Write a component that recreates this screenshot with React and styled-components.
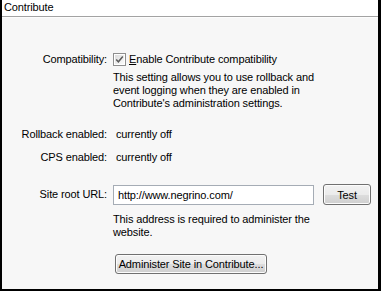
import React from "react";
import styled, { createGlobalStyle } from "styled-components";

const Global = createGlobalStyle`
  html, body { margin: 0; padding: 0; background: #fff; }
  body { font-family: "Liberation Sans", Arial, sans-serif; font-size: 11px; color: #000; letter-spacing: -0.12px; }
`;

const Frame = styled.div`
  box-sizing: border-box;
  width: 381px;
  height: 291px;
  border-left: 2px solid #000;
  border-right: 3px solid #000;
  border-bottom: 2px solid #000;
  background: #f7f7f7;
  display: flex;
  flex-direction: column;
`;

const Header = styled.div`
  background: #fff;
  height: 17px;
  padding: 1px 0 0 2px;
  box-sizing: border-box;
  line-height: 13px;
  font-size: 11px;
  border-bottom: 1px solid #a3a3a3;
  box-shadow: 0 1px 0 #fdfdfd;
`;

const Body = styled.div`
  display: flex;
  flex-direction: column;
`;

const Row = styled.div`
  display: grid;
  grid-template-columns: 105px auto 1fr;
  column-gap: 6px;
  align-items: center;
  margin-top: ${(p) => p.$mt}px;
  line-height: 13px;
`;

const Label = styled.div`
  text-align: right;
  white-space: nowrap;
`;

const Value = styled.div`
  grid-column: ${(p) => (p.$span ? "2 / span 2" : "auto")};
  white-space: nowrap;
`;

const Note = styled.div`
  grid-column: 2 / span 2;
  line-height: 13px;
`;

const CheckLabel = styled.label`
  grid-column: 2 / span 2;
  display: flex;
  align-items: center;
  gap: 3px;
`;

const Box = styled.span`
  width: 13px;
  height: 13px;
  display: inline-block;
`;

const U = styled.span`
  text-decoration: underline;
`;

const Input = styled.div`
  box-sizing: border-box;
  width: 201px;
  height: 20px;
  border: 1px solid #a5acb5;
  background: #fff;
  padding: 0 4px;
  line-height: 18px;
  font-size: 11px;
`;

const Button = styled.button`
  box-sizing: border-box;
  font-family: "Liberation Sans", Arial, sans-serif;
  font-size: 11px;
  letter-spacing: -0.12px;
  color: #000;
  height: ${(p) => p.$h}px;
  width: ${(p) => p.$w}px;
  padding: 0;
  border: 1px solid #707070;
  border-radius: 3px;
  background: linear-gradient(#f2f2f2 0%, #ebebeb 50%, #dddddd 51%, #cfcfcf 100%);
  box-shadow: inset 0 0 0 1px #fcfcfc;
  margin-left: ${(p) => p.$ml || 0}px;
  justify-self: start;
`;

const Checkbox = () => (
  <Box>
    <svg width="13" height="13" viewBox="0 0 13 13">
      <defs>
        <linearGradient id="cbg" x1="0" y1="0" x2="1" y2="1">
          <stop offset="0" stopColor="#dcdcdc" />
          <stop offset="1" stopColor="#fbfbfb" />
        </linearGradient>
      </defs>
      <rect x="0.5" y="0.5" width="12" height="12" fill="#fff" stroke="#8f8f8f" />
      <rect x="2" y="2" width="9" height="9" fill="url(#cbg)" />
      <path d="M3.2 6.4 L5.4 8.8 L9.8 3.6" fill="none" stroke="#5b5b5b" strokeWidth="1.5" />
    </svg>
  </Box>
);

export default function App() {
  return (
    <>
      <Global />
      <Frame>
        <Header>Contribute</Header>
        <Body>
          <Row $mt={36}>
            <Label>Compatibility:</Label>
            <CheckLabel>
              <Checkbox />
              <span>
                <U>E</U>nable Contribute compatibility
              </span>
            </CheckLabel>
          </Row>
          <Row $mt={5}>
            <span />
            <Note>
              This setting allows you to use rollback and
              <br />
              event logging when they are enabled in
              <br />
              Contribute's administration settings.
            </Note>
          </Row>
          <Row $mt={18}>
            <Label>Rollback enabled:</Label>
            <Value $span>&nbsp;currently off</Value>
          </Row>
          <Row $mt={10}>
            <Label>CPS enabled:</Label>
            <Value $span>&nbsp;currently off</Value>
          </Row>
          <Row $mt={20}>
            <Label>Site root URL:</Label>
            <Input>http://www.negrino.com/</Input>
            <Button $w={48} $h={21} $ml={3}>Test</Button>
          </Row>
          <Row $mt={8}>
            <span />
            <Note>
              This address is required to administer the
              <br />
              website.
            </Note>
          </Row>
          <Row $mt={15}>
            <span />
            <Value $span>
              <Button $w={152} $h={20} $ml={2}>Administer Site in Contribute...</Button>
            </Value>
          </Row>
        </Body>
      </Frame>
    </>
  );
}
